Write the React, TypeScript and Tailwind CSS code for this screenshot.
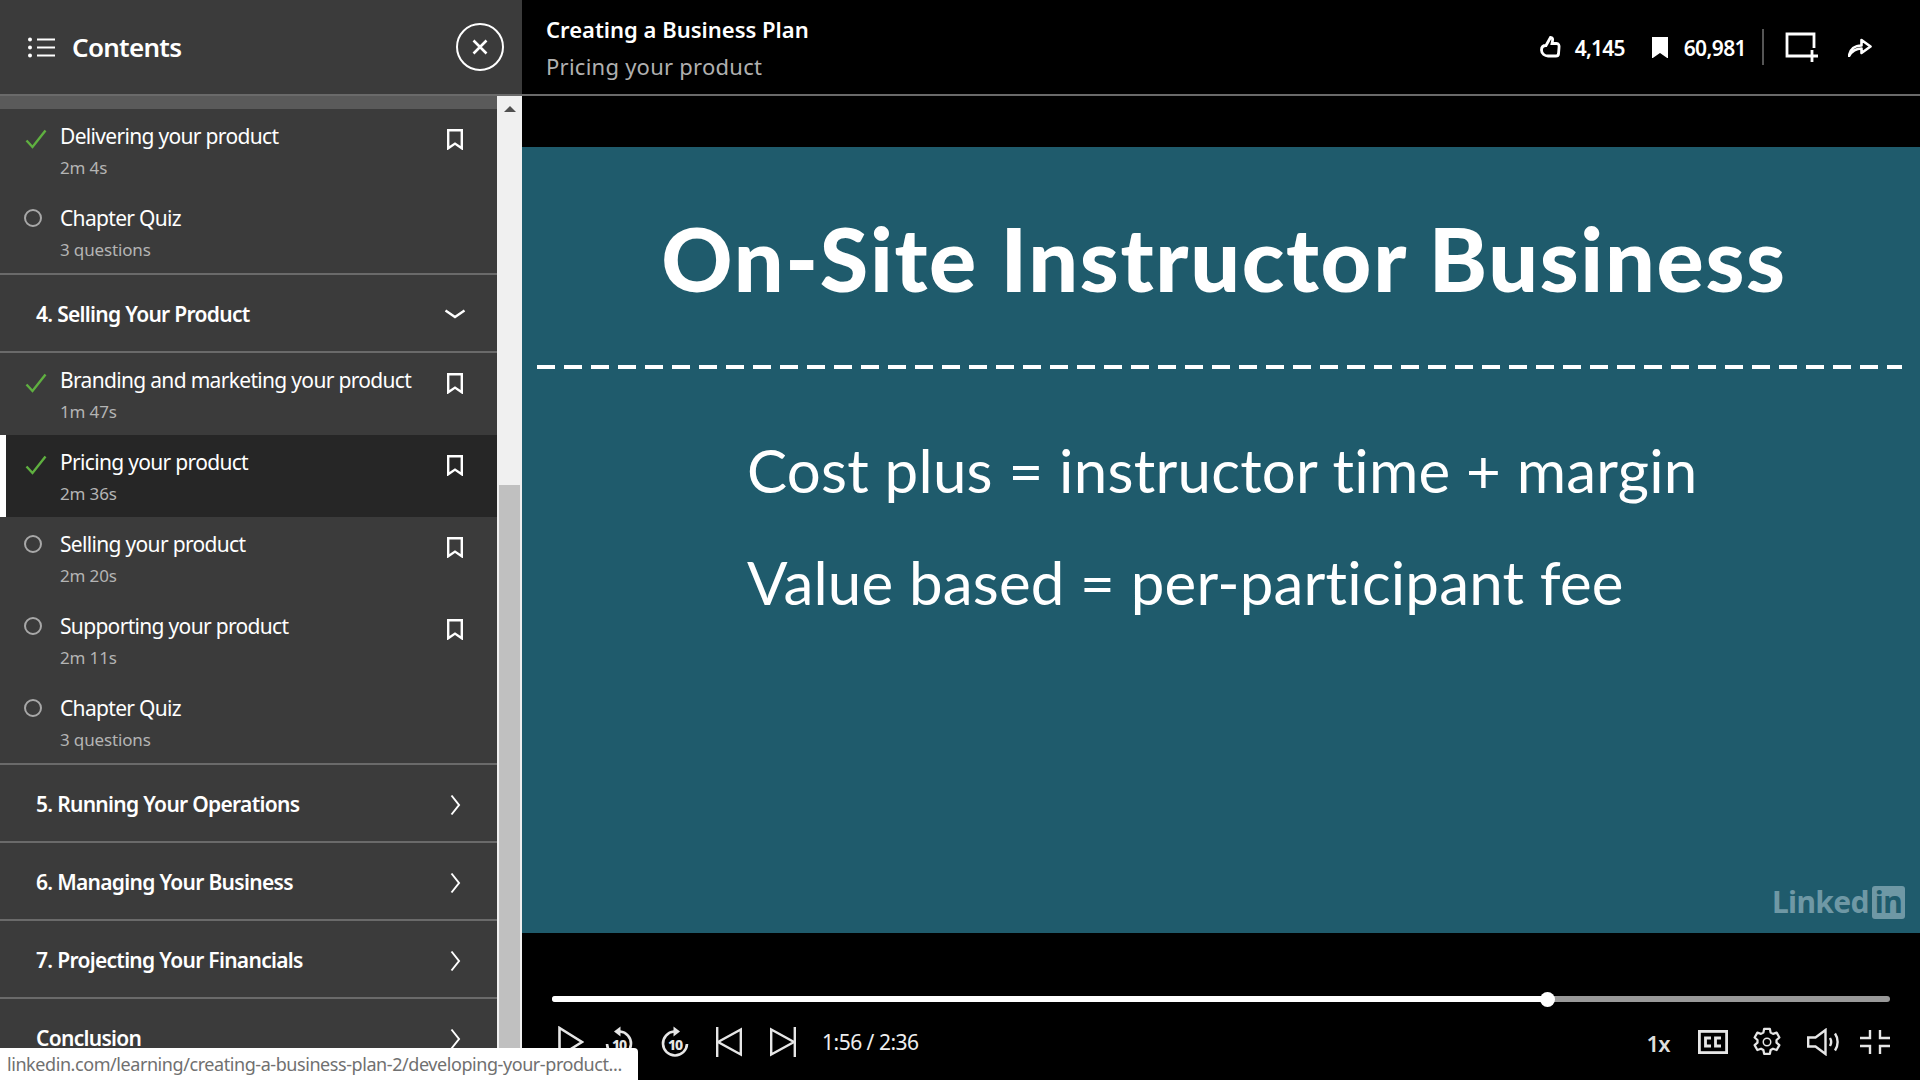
import React from "react";

const font = { fontFamily: '"Noto Sans", "Open Sans", sans-serif' };

function Bookmark({ solid = false, className = "" }: { solid?: boolean; className?: string }) {
  return (
    <svg viewBox="0 0 16 21" width="16" height="21" className={className}>
      <path
        d="M1.2 1.2H14.8V19.3L8 14.6L1.2 19.3Z"
        fill={solid ? "#fff" : "none"}
        stroke="#fff"
        strokeWidth="2.4"
      />
    </svg>
  );
}

function Status({ done }: { done: boolean }) {
  return (
    <div className="w-[60px] shrink-0 pl-[24px]">
      {done ? (
        <svg viewBox="0 0 22 20" width="22" height="20" className="mt-[20px] ml-[1px]">
          <path d="M1.5 11.5L7.5 18L20.5 1.5" fill="none" stroke="#5fb040" strokeWidth="2.4" />
        </svg>
      ) : (
        <div className="mt-[18px] h-[18px] w-[18px] rounded-full border-2 border-[#a8a8a8]" />
      )}
    </div>
  );
}

function Lesson({
  title,
  sub,
  done = false,
  active = false,
  mark = true,
}: {
  title: string;
  sub: string;
  done?: boolean;
  active?: boolean;
  mark?: boolean;
}) {
  return (
    <div className={`relative flex h-[82px] shrink-0 ${active ? "bg-[#262626]" : ""}`}>
      {active && <div className="absolute left-0 top-0 h-full w-[6px] bg-white" />}
      <Status done={done} />
      <div className="flex-1">
        <div className="mt-[12px] h-[30px] text-[21px] leading-[30px] tracking-[-0.68px] text-white">{title}</div>
        <div className="mt-[4px] text-[17px] leading-[26px] tracking-[-0.15px] text-[#b4b4b4]">{sub}</div>
      </div>
      {mark && <Bookmark className="mr-[34px] mt-[20px]" />}
    </div>
  );
}

function Section({ title, open = false }: { title: string; open?: boolean }) {
  return (
    <div className="flex h-[78px] shrink-0 items-center justify-between border-b-2 border-[#6a6a6a] pl-[36px] pr-[31px] pt-[4px]">
      <span className="text-[21px] font-semibold tracking-[-0.7px] text-white">{title}</span>
      {open ? (
        <svg viewBox="0 0 22 10" width="22" height="10" className="mb-[2px]">
          <path d="M1.5 1.5L11 8L20.5 1.5" fill="none" stroke="#fff" strokeWidth="2.4" />
        </svg>
      ) : (
        <svg viewBox="0 0 11 22" width="11" height="22" className="mr-[5px]">
          <path d="M1.5 1.5L9 11L1.5 20.5" fill="none" stroke="#fff" strokeWidth="2" />
        </svg>
      )}
    </div>
  );
}

function Sidebar() {
  return (
    <div className="flex h-full w-[522px] shrink-0 flex-col bg-[#3b3b3b]">
      <div className="flex h-[96px] shrink-0 items-center border-b-2 border-[#6a6a6a] pl-[28px] pr-[18px]">
        <svg viewBox="0 0 27 21" width="27" height="21">
          <circle cx="2" cy="2.5" r="2" fill="#fff" />
          <circle cx="2" cy="10.5" r="2" fill="#fff" />
          <circle cx="2" cy="18.5" r="2" fill="#fff" />
          <path d="M9 2.5H27M9 10.5H27M9 18.5H27" stroke="#fff" strokeWidth="2.2" />
        </svg>
        <span className="ml-[17px] text-[26px] font-semibold tracking-[-0.7px] text-white">Contents</span>
        <div className="ml-auto flex h-[48px] w-[48px] items-center justify-center rounded-full border-2 border-white">
          <svg viewBox="0 0 16 16" width="16" height="16">
            <path d="M1.5 1.5L14.5 14.5M14.5 1.5L1.5 14.5" stroke="#fff" strokeWidth="2.6" />
          </svg>
        </div>
      </div>
      <div className="flex min-h-0 flex-1">
        <div className="flex w-[497px] shrink-0 flex-col overflow-hidden">
          <div className="h-[13px] shrink-0 bg-[#5a5a5a]" />
          <Lesson title="Delivering your product" sub="2m 4s" done />
          <Lesson title="Chapter Quiz" sub="3 questions" mark={false} />
          <div className="h-[2px] shrink-0 bg-[#6a6a6a]" />
          <Section title="4. Selling Your Product" open />
          <Lesson title="Branding and marketing your product" sub="1m 47s" done />
          <Lesson title="Pricing your product" sub="2m 36s" done active />
          <Lesson title="Selling your product" sub="2m 20s" />
          <Lesson title="Supporting your product" sub="2m 11s" />
          <Lesson title="Chapter Quiz" sub="3 questions" mark={false} />
          <div className="h-[2px] shrink-0 bg-[#6a6a6a]" />
          <Section title="5. Running Your Operations" />
          <Section title="6. Managing Your Business" />
          <Section title="7. Projecting Your Financials" />
          <Section title="Conclusion" />
        </div>
        <div className="flex w-[25px] shrink-0 flex-col bg-[#f0f0f0] px-[2px]">
          <div className="flex h-[389px] shrink-0 justify-center pt-[10px]">
            <div className="h-0 w-0 border-x-[6px] border-b-[6px] border-x-transparent border-b-[#505050]" />
          </div>
          <div className="flex-1 bg-[#c0c0c0]" />
        </div>
      </div>
    </div>
  );
}

function TopBar() {
  return (
    <div className="flex h-[96px] shrink-0 items-center border-b-2 border-[#6a6a6a] bg-black pl-[24px]">
      <div className="flex flex-col">
        <span className="text-[22px] font-semibold leading-[32px] tracking-[0px] text-white">
          Creating a Business Plan
        </span>
        <span className="mt-[5px] text-[22px] leading-[32px] tracking-[0.25px] text-[#b0b0b0]">
          Pricing your product
        </span>
      </div>
      <div className="ml-auto flex items-center pr-[48px]">
        <svg viewBox="0 0 21 22" width="21" height="22">
          <path
            d="M6 9.5L10.5 1.5C12.5 1.5 13 3 12.5 5L12 7.5H16.5C18.5 7.5 19.5 9 19 12L18.5 18C18.3 19.5 17.5 20 16 20H8C5 20 1.5 18 1.5 14C1.5 11 3.5 9.5 6 9.5Z"
            fill="none"
            stroke="#fff"
            strokeWidth="2.8"
          />
        </svg>
        <span className="ml-[14px] mt-[3px] text-[21px] font-semibold tracking-[-0.8px] text-white">4,145</span>
        <Bookmark solid className="ml-[27px]" />
        <span className="ml-[16px] mt-[3px] text-[21px] font-semibold tracking-[-0.6px] text-white">60,981</span>
        <div className="ml-[16px] h-[36px] w-[2px] bg-[#555]" />
        <svg viewBox="0 0 34 30" width="34" height="30" className="ml-[21px]">
          <path d="M29 16V2H2V24H21" fill="none" stroke="#fff" strokeWidth="2.8" />
          <path d="M27 18V30M21 24H33" stroke="#fff" strokeWidth="2.8" />
        </svg>
        <svg viewBox="0 0 24 20" width="24" height="20" className="ml-[29px]">
          <path
            d="M1 19C2 12 7 8.5 13.5 8.5V3L22.5 9.5L13.5 16V11.5C8.5 11.5 4 14 1 19Z"
            fill="none"
            stroke="#fff"
            strokeWidth="2.6"
            strokeLinejoin="round"
          />
        </svg>
      </div>
    </div>
  );
}

function Slide() {
  return (
    <div className="flex h-[786px] shrink-0 flex-col bg-[#1f5b6c] text-white" style={{ fontFamily: "Lato, sans-serif" }}>
      <div className="mt-[56px] h-[110px] pl-[6px] text-center text-[88px] font-black leading-[110px] tracking-[1.7px]">
        On-Site Instructor Business
      </div>
      <div className="ml-[15px] mr-[18px] mt-[52px] h-[4px] bg-[repeating-linear-gradient(to_right,#fff_0,#fff_18px,transparent_18px,transparent_27px)]" />
      <div className="ml-[225px] mt-[61px] text-[60px] font-normal leading-[80px] tracking-[0.25px]">
        Cost plus = instructor time + margin
      </div>
      <div className="ml-[225px] mt-[32px] text-[60px] font-normal leading-[80px] tracking-[0.2px]">
        Value based = per-participant fee
      </div>
      <div className="mt-auto mb-[14px] mr-[15px] flex items-center self-end text-[#6f98a5]" style={font}>
        <span className="text-[30px] font-bold leading-[34px] tracking-[-0.6px]">Linked</span>
        <span className="ml-[3px] flex h-[33px] w-[33px] items-center justify-center rounded-[3px] bg-[#6f98a5] text-[30px] font-bold leading-none tracking-[-0.5px] text-[#1f5b6c]">
          in
        </span>
      </div>
    </div>
  );
}

function Replay({ forward = false, className = "" }: { forward?: boolean; className?: string }) {
  return (
    <svg viewBox="0 0 28 32" width="28" height="32" className={className}>
      <g transform={forward ? "" : "translate(28,0) scale(-1,1)"}>
        <path
          d="M14 5.5H13A12 12 0 1 0 26 18"
          fill="none"
          stroke="#e6e6e6"
          strokeWidth="2.6"
        />
        <path d="M12.5 0.5L19 5.5L12.5 10.5Z" fill="#e6e6e6" />
      </g>
      <text x="14" y="24" textAnchor="middle" fontSize="14" fontWeight="800" fill="#e6e6e6" fontFamily="Noto Sans" letterSpacing="-1">
        10
      </text>
    </svg>
  );
}

function Controls() {
  return (
    <div className="flex flex-1 flex-col bg-black pl-[30px] pr-[30px]">
      <div className="relative mt-[63px] flex h-[6px] w-full shrink-0 rounded-full bg-[#999]">
        <div className="h-full w-[995px] rounded-full bg-white" />
        <div className="absolute left-[988px] top-[-4.5px] h-[15px] w-[15px] rounded-full bg-white" />
      </div>
      <div className="mt-[25px] flex h-[30px] items-center">
        <svg viewBox="0 0 26 32" width="26" height="32" className="ml-[6px]">
          <path d="M1.5 2V30L24 16Z" fill="none" stroke="#e6e6e6" strokeWidth="2.6" />
        </svg>
        <Replay className="ml-[21px]" />
        <Replay forward className="ml-[28px]" />
        <svg viewBox="0 0 26 30" width="26" height="30" className="ml-[27px]">
          <path d="M1.2 0V30" stroke="#e6e6e6" strokeWidth="2.4" />
          <path d="M24.8 2.5V27.5L2 15Z" fill="none" stroke="#e6e6e6" strokeWidth="2.4" />
        </svg>
        <svg viewBox="0 0 26 30" width="26" height="30" className="ml-[28px]">
          <path d="M24.8 0V30" stroke="#e6e6e6" strokeWidth="2.4" />
          <path d="M1.2 2.5V27.5L24 15Z" fill="none" stroke="#e6e6e6" strokeWidth="2.4" />
        </svg>
        <span className="ml-[26px] mt-[2px] text-[21px] tracking-[-0.5px] text-[#eeeeee]">1:56 / 2:36</span>
        <span className="ml-auto mt-[2px] text-[22px] font-semibold tracking-[-0.7px] text-[#dddddd]">1x</span>
        <svg viewBox="0 0 30 24" width="30" height="24" className="ml-[28px]">
          <rect x="1.4" y="1.4" width="27.2" height="21.2" fill="none" stroke="#e6e6e6" strokeWidth="2.8" />
          <path d="M13 8H7.5V16H13M23 8H17.5V16H23" fill="none" stroke="#e6e6e6" strokeWidth="2.8" />
        </svg>
        <svg viewBox="0 0 24 24" width="30" height="30" className="ml-[24px]" fill="none" stroke="#e6e6e6" strokeWidth="1.8" strokeLinejoin="round">
          <path d="M9.7 1.5h4.6l.6 3 1.9 1 2.9-1 2.2 3.9-2.3 2v2.1l2.3 2-2.2 3.9-2.9-1-1.9 1-.6 3H9.7l-.6-3-1.9-1-2.9 1-2.2-3.9 2.3-2v-2.1l-2.3-2 2.2-3.9 2.9 1 1.9-1z" />
          <circle cx="12" cy="12" r="3" strokeWidth="1.2" />
        </svg>
        <svg viewBox="0 0 33 28" width="33" height="28" className="ml-[25px]">
          <path d="M1.2 9.5H8.5L18.5 2V26L8.5 18.5H1.2Z" fill="none" stroke="#e6e6e6" strokeWidth="2.4" />
          <path d="M23 10C24.5 12.5 24.5 15.5 23 18M28 5.5C31.5 10.5 31.5 17.5 28 22.5" fill="none" stroke="#e6e6e6" strokeWidth="2.4" />
        </svg>
        <svg viewBox="0 0 30 24" width="30" height="24" className="ml-[20px]">
          <path d="M0 8H10V0M20 0V8H30M0 16H10V24M20 24V16H30" fill="none" stroke="#e6e6e6" strokeWidth="2.4" />
        </svg>
      </div>
    </div>
  );
}

export default function App() {
  return (
    <div className="relative flex h-[1080px] w-[1920px] overflow-hidden bg-black" style={font}>
      <Sidebar />
      <div className="flex h-full flex-1 flex-col">
        <TopBar />
        <div className="h-[51px] shrink-0 bg-black" />
        <Slide />
        <Controls />
      </div>
      <div className="absolute bottom-0 left-0 h-[32px] w-[638px] rounded-tr-[4px] bg-white pl-[7px] text-[18px] leading-[32px] tracking-[-0.43px] whitespace-nowrap text-[#707070]">
        linkedin.com/learning/creating-a-business-plan-2/developing-your-product...
      </div>
    </div>
  );
}
